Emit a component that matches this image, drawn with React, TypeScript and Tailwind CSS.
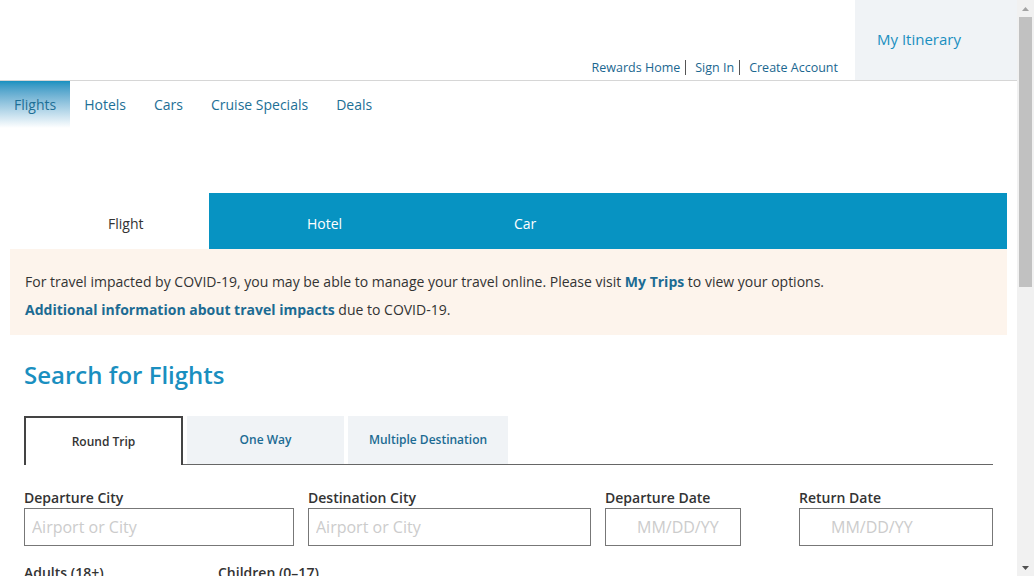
import { FC } from "react";

const navItems = ["Flights", "Hotels", "Cars", "Cruise Specials", "Deals"];
const topLinks = ["Rewards Home", "Sign In", "Create Account"];

const Scrollbar: FC = () => (
  <aside className="flex h-[576px] w-[17px] shrink-0 flex-col bg-[#f1f1f1]">
    <div className="flex h-[17px] items-center justify-center">
      <svg width="7" height="4" viewBox="0 0 7 4">
        <path d="M0 4 L3.5 0 L7 4 Z" fill="#a3a3a3" />
      </svg>
    </div>
    <div className="mx-[2px] h-[270px] bg-[#c1c1c1]" />
    <div className="flex-1" />
    <div className="flex h-[17px] items-center justify-center">
      <svg width="7" height="4" viewBox="0 0 7 4">
        <path d="M0 0 L7 0 L3.5 4 Z" fill="#505050" />
      </svg>
    </div>
  </aside>
);

const App: FC = () => {
  return (
    <div
      className="flex h-[576px] overflow-hidden bg-white text-[#333]"
      style={{ fontFamily: '"Open Sans", "Noto Sans", sans-serif' }}
    >
      <div className="min-w-0 flex-1">
        {/* Header */}
        <header className="flex h-[81px] border-b border-[#d6d6d6]">
          <div className="flex flex-1 items-end justify-end pb-[5px] pr-[17px]">
            {topLinks.map((l, i) => (
              <a
                key={l}
                href="#"
                className={`pl-[9px] text-[12.5px] leading-[15px] text-[#1b6790] ${
                  i < topLinks.length - 1 ? "border-r border-[#555] pr-[5px]" : "pr-0"
                } ${i === 0 ? "pl-0" : ""}`}
              >
                {l}
              </a>
            ))}
          </div>
          <div className="flex h-[80px] w-[162px] items-center bg-[#f0f3f6] pb-[2px] pl-[22px]">
            <a href="#" className="text-[15px] text-[#1a8fc0]">
              My Itinerary
            </a>
          </div>
        </header>

        {/* Main nav */}
        <nav className="flex h-[47px]">
          {navItems.map((n, i) => (
            <a
              key={n}
              href="#"
              className={`flex items-center px-[14px] pb-[1px] text-[14px] text-[#1d6f96] ${
                i === 0 ? "bg-gradient-to-b from-[#1591c0] to-white" : ""
              }`}
            >
              {n}
            </a>
          ))}
        </nav>

        {/* Product tabs */}
        <div className="mx-[10px] mt-[65px] flex h-[56px] bg-[#0793c2] pt-[4px]">
          <div className="-mt-[4px] flex w-[199px] items-center bg-white pl-[98px] pt-[4px] text-[14px] text-[#333]">
            Flight
          </div>
          <div className="flex w-[200px] items-center pl-[98px] text-[14px] text-white">Hotel</div>
          <div className="flex w-[200px] items-center pl-[105px] text-[14px] text-white">Car</div>
        </div>

        {/* COVID banner */}
        <div className="mx-[10px] bg-[#fdf4ec] px-[15px] pb-[11px] pt-[19px] text-[14px] leading-[28px] text-[#333]">
          <p>
            For travel impacted by COVID-19, you may be able to manage your travel online. Please visit{" "}
            <a href="#" className="font-bold text-[#1c6b93]">
              My Trips
            </a>{" "}
            to view your options.
          </p>
          <p>
            <a href="#" className="font-bold text-[#1c6b93]">
              Additional information about travel impacts
            </a>{" "}
            due to COVID-19.
          </p>
        </div>

        {/* Search */}
        <section className="px-[24px]">
          <h1 className="mt-[23px] text-[24px] font-semibold leading-[34px] text-[#1a8fc0]">
            Search for Flights
          </h1>

          <div className="mt-[24px] flex h-[49px] items-end border-b border-[#666]">
            <button className="relative -mb-px flex h-[49px] w-[159px] items-center justify-center border-2 border-b-0 border-[#444] bg-white text-[12px] font-semibold text-[#333]">
              Round Trip
            </button>
            <button className="ml-[4px] flex h-[48px] w-[157px] items-center justify-center bg-[#f0f3f6] text-[12px] font-semibold text-[#1c6b93]">
              One Way
            </button>
            <button className="ml-[4px] flex h-[48px] w-[160px] items-center justify-center bg-[#f0f3f6] text-[12px] font-semibold text-[#1c6b93]">
              Multiple Destination
            </button>
          </div>

          <div className="mt-[23px] flex">
            <label className="flex w-[270px] flex-col">
              <span className="text-[14px] font-semibold leading-[20px]">Departure City</span>
              <input
                placeholder="Airport or City"
                className="h-[38px] border border-[#777] px-[7px] text-[16px] placeholder:text-[#ccc]"
              />
            </label>
            <label className="ml-[14px] flex w-[283px] flex-col">
              <span className="text-[14px] font-semibold leading-[20px]">Destination City</span>
              <input
                placeholder="Airport or City"
                className="h-[38px] border border-[#777] px-[7px] text-[16px] placeholder:text-[#ccc]"
              />
            </label>
            <label className="ml-[14px] flex w-[136px] flex-col">
              <span className="text-[14px] font-semibold leading-[20px]">Departure Date</span>
              <input
                placeholder="MM/DD/YY"
                className="h-[38px] border border-[#777] pl-[31px] text-[16px] placeholder:text-[#ccc]"
              />
            </label>
            <label className="ml-[58px] flex w-[194px] flex-col">
              <span className="text-[14px] font-semibold leading-[20px]">Return Date</span>
              <input
                placeholder="MM/DD/YY"
                className="h-[38px] border border-[#777] pl-[31px] text-[16px] placeholder:text-[#ccc]"
              />
            </label>
          </div>

          <div className="mt-[17px] flex text-[14px] font-semibold leading-[20px]">
            <span className="w-[194px]">Adults (18+)</span>
            <span>Children (0–17)</span>
          </div>
        </section>
      </div>
      <Scrollbar />
    </div>
  );
};

export default App;
